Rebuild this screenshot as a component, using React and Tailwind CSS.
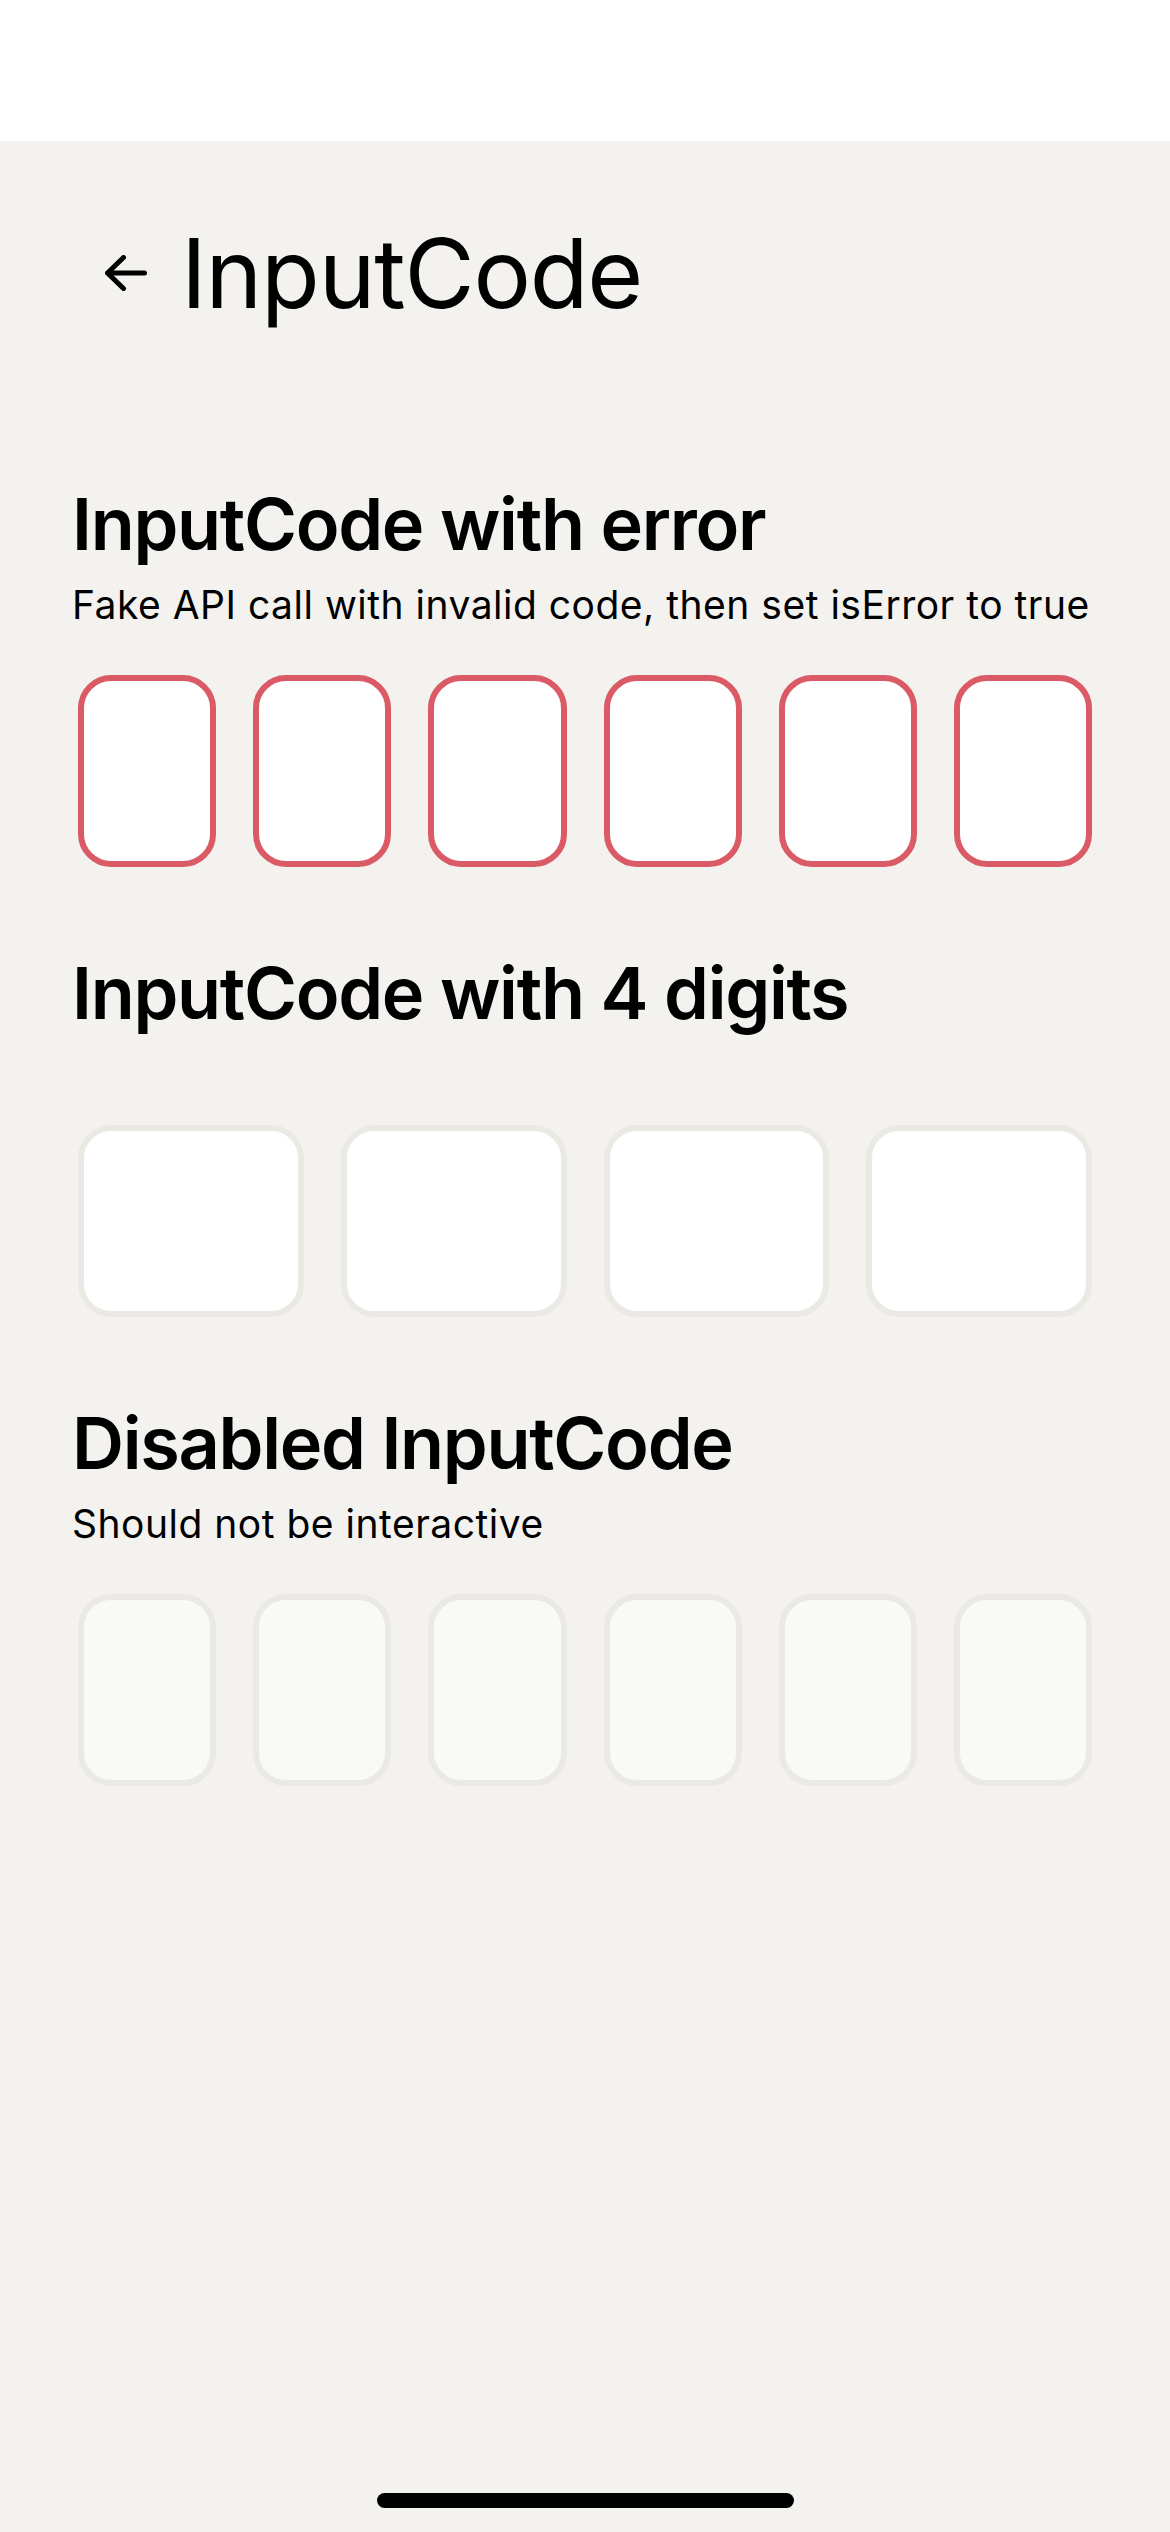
import React from "react";

const font = { fontFamily: "Inter, 'Noto Sans', sans-serif" };

function BackArrow() {
    return (
        <svg width="42" height="36" viewBox="0 0 42 36" fill="none" stroke="#000" strokeWidth="5" strokeLinecap="round" strokeLinejoin="round">
            <path d="M2.5 18H39.5M18.5 2.5L2.5 18L18.5 33.5" />
        </svg>
    );
}

function CodeBox({ variant }) {
    const styles = {
        error: "bg-white border-[#da5a65]",
        normal: "bg-white border-[#eae9e4]",
        disabled: "bg-[#f9f9f7] border-[#eae9e4]"
    };
    return <div className={`flex-1 h-[192px] border-[6px] rounded-[33px] ${styles[variant]}`} />;
}

function CodeRow({ count, variant }) {
    return (
        <div className="flex gap-[37px] px-[6px]">
            {Array.from({ length: count }).map((_, i) => (
                <CodeBox key={i} variant={variant} />
            ))}
        </div>
    );
}

function Section({ title, subtitle, children, className = "" }) {
    return (
        <section className={className}>
            <h2 className="text-[72px] leading-none font-semibold tracking-[-1.3px] text-black">{title}</h2>
            {subtitle && <p className="mt-[25px] text-[39px] leading-none tracking-[0.5px] text-black">{subtitle}</p>}
            {children}
        </section>
    );
}

export default function App() {
    return (
        <div className="min-h-[2532px] flex flex-col bg-[#f3f2ee]" style={font}>
            {/* status bar */}
            <div className="h-[141px] bg-white" />

            <main className="flex-1 flex flex-col px-[72px]">
                <header className="flex items-center gap-[34px] pt-[84px] pl-[33px]">
                    <BackArrow />
                    <h1 className="text-[96px] leading-none font-normal tracking-[-1.2px] text-black">InputCode</h1>
                </header>

                <Section
                    className="mt-[167px]"
                    title="InputCode with error"
                    subtitle="Fake API call with invalid code, then set isError to true"
                >
                    <div className="mt-[51px]">
                        <CodeRow count={6} variant="error" />
                    </div>
                </Section>

                <Section className="mt-[90px]" title="InputCode with 4 digits">
                    <div className="mt-[96px]">
                        <CodeRow count={4} variant="normal" />
                    </div>
                </Section>

                <Section className="mt-[90px]" title="Disabled InputCode" subtitle="Should not be interactive">
                    <div className="mt-[51px]">
                        <CodeRow count={6} variant="disabled" />
                    </div>
                </Section>

                {/* home indicator */}
                <div className="mt-auto pb-[24px] flex justify-center">
                    <div className="w-[417px] h-[15px] rounded-full bg-black" />
                </div>
            </main>
        </div>
    );
}
